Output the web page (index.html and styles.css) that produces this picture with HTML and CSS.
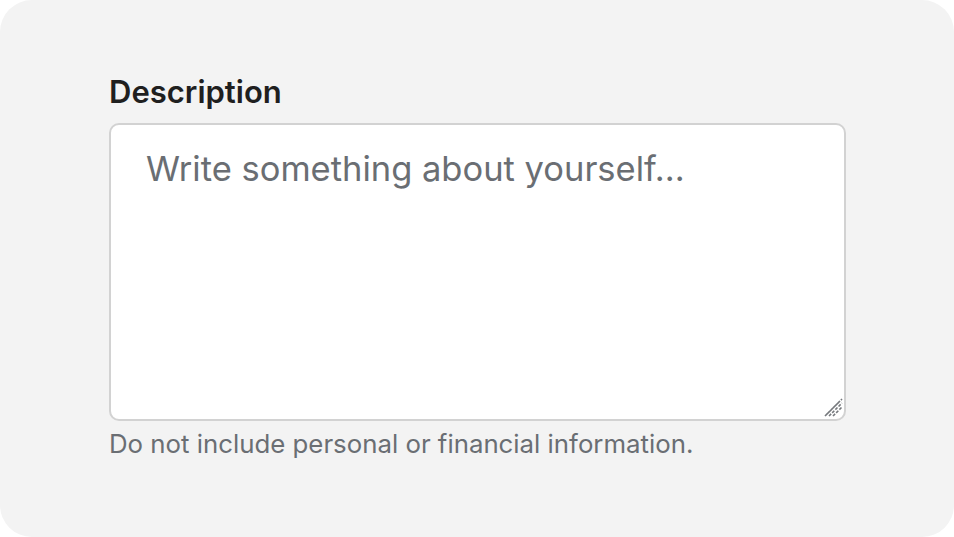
FILE: index.html
```html
<!DOCTYPE html>
<html lang="en">
<head>
<meta charset="utf-8">
<link rel="stylesheet" href="styles.css">
</head>
<body>
<div class="card">
  <div class="field">
    <label class="label" for="desc">Description</label>
    <div class="textarea-wrap">
      <textarea id="desc" class="textarea" placeholder="Write something about yourself..."></textarea>
      <svg class="grip" width="20" height="20" viewBox="0 0 20 20">
        <path d="M2 19 L19 2 M6 19 L19 6 M10 19 L19 10 M4 17 L17 4" stroke="#76797d" stroke-width="1.6" stroke-dasharray="3 1.5" fill="none"/>
      </svg>
    </div>
    <div class="helper">Do not include personal or financial information.</div>
  </div>
</div>
</body>
</html>
```
FILE: styles.css
```css
html, body {
  margin: 0;
  padding: 0;
  background: #ffffff;
}
body {
  font-family: Inter, "Open Sans", sans-serif;
}
.card {
  width: 954px;
  height: 537px;
  box-sizing: border-box;
  background: #f3f3f3;
  border-radius: 32px;
  padding: 74px 0 0 109px;
}
.field {
  display: flex;
  flex-direction: column;
  width: 737px;
}
.label {
  font-size: 31px;
  font-weight: 600;
  color: #1f1f1f;
  line-height: 36px;
  margin-bottom: 13px;
}
.textarea-wrap {
  position: relative;
  height: 298px;
}
.textarea {
  display: block;
  width: 100%;
  height: 100%;
  box-sizing: border-box;
  border: 2px solid #d2d2d2;
  border-radius: 10px;
  background: #fff;
  resize: none;
  padding: 24px 35px;
  font-family: inherit;
  font-size: 34.5px;
  line-height: 40px;
  color: #1f1f1f;
  outline: none;
}
.textarea::placeholder {
  color: #6a6e73;
  opacity: 1;
}
.grip {
  position: absolute;
  right: 3px;
  bottom: 4px;
}
.helper {
  margin-top: 7px;
  font-size: 25.8px;
  line-height: 32px;
  color: #6a6e73;
}
```
